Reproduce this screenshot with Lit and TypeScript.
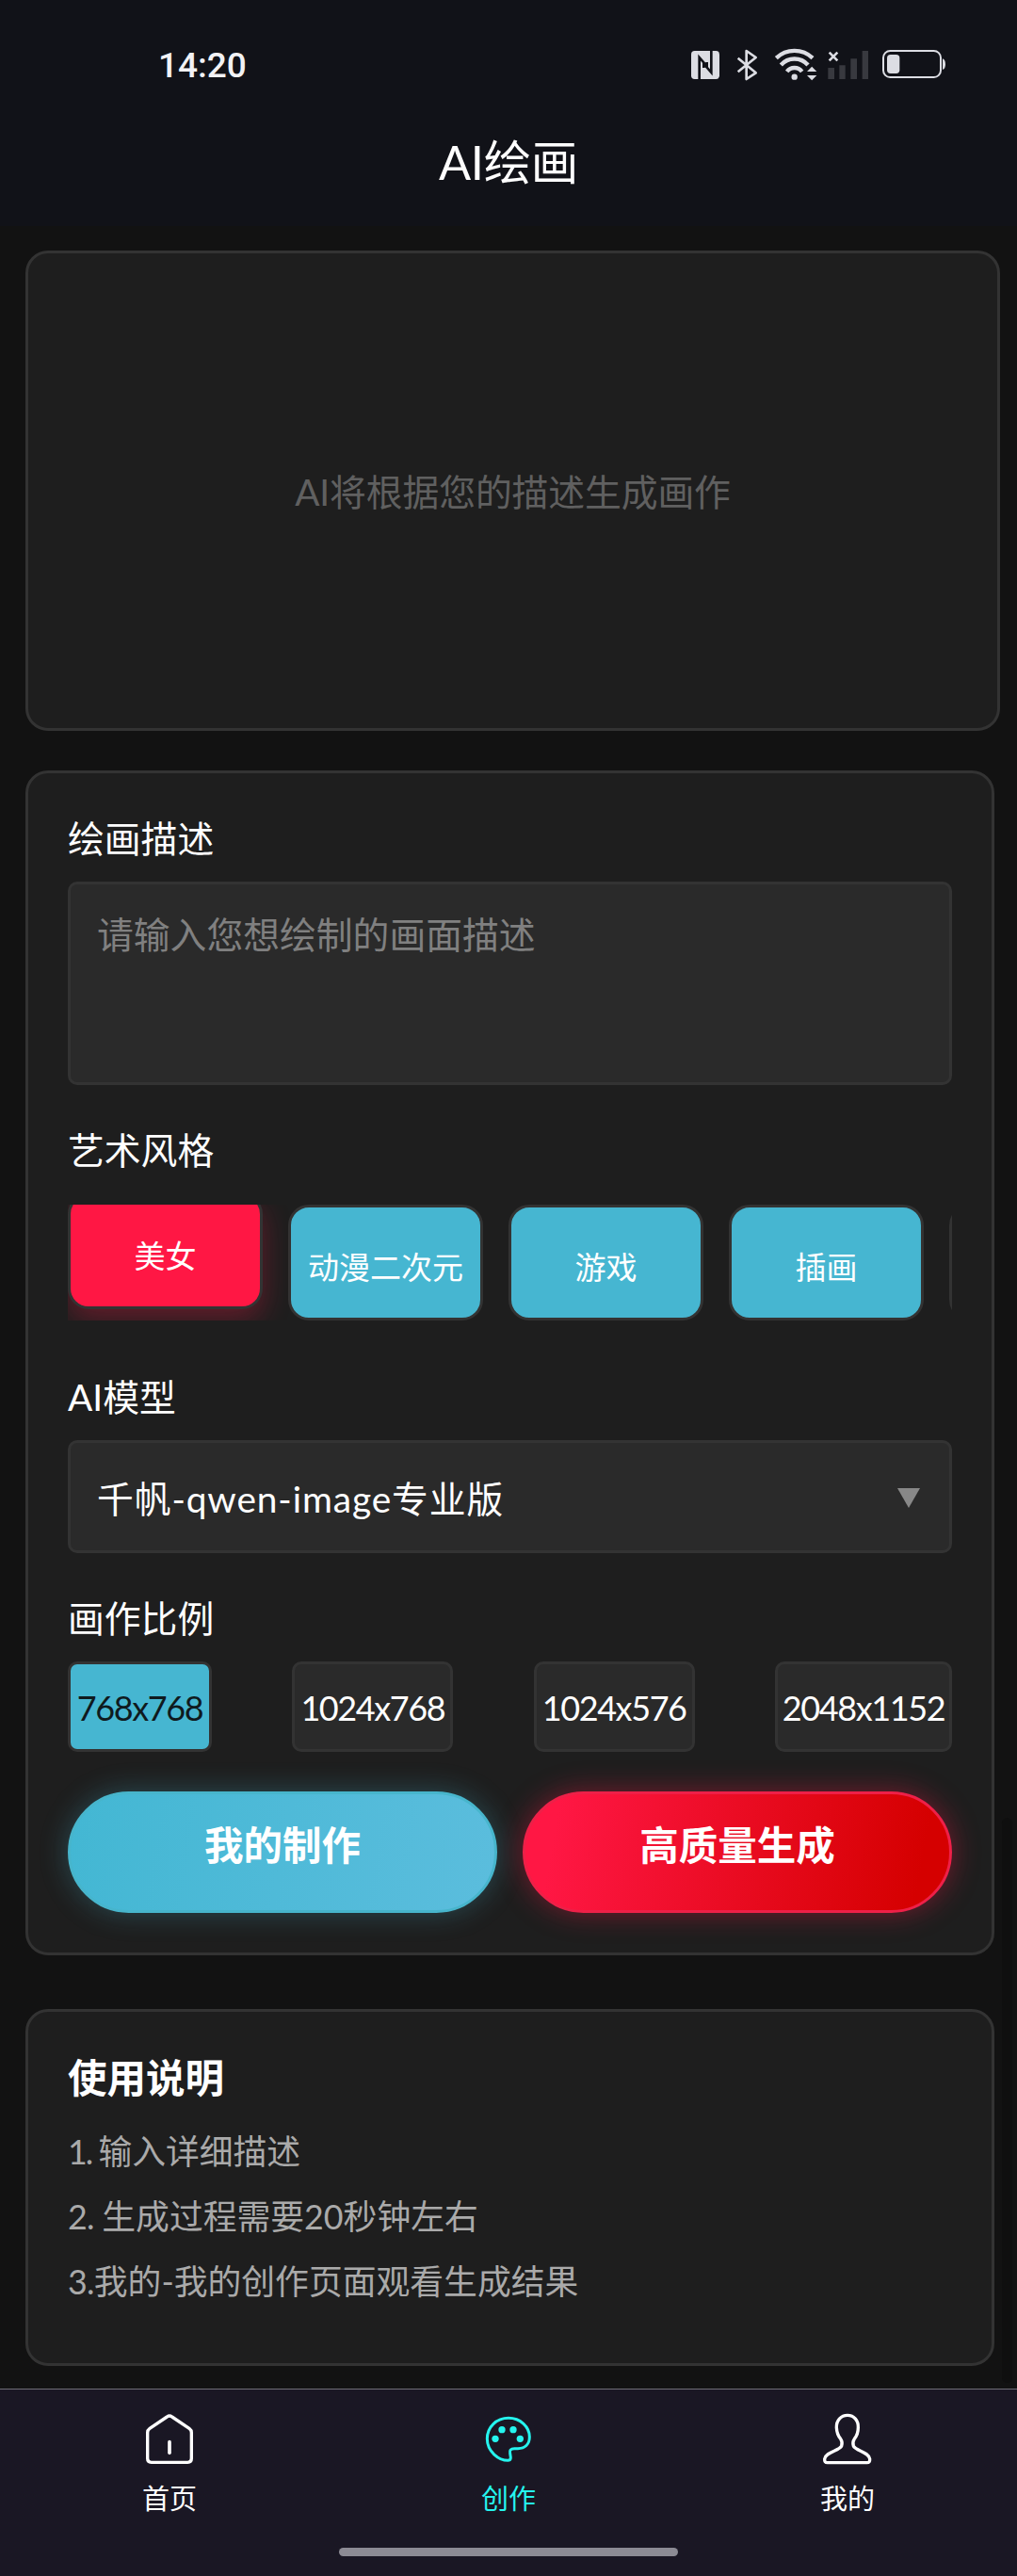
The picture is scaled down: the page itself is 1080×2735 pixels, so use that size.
import { LitElement, html, svg, css } from "lit";
import { customElement, state } from "lit/decorators.js";
import { classMap } from "lit/directives/class-map.js";

const statusIcons = svg`
  <rect x="102" y="72" width="90" height="90" rx="11" fill="#dcdde3"/>
  <path d="M128 164V93L152 121V108M166 70V141L142 113V126" fill="none" stroke="#111218" stroke-width="8"/>
  <path d="M251 95L308 142L278 162V72L308 93L251 139" fill="none" stroke="#dcdde3" stroke-width="8" stroke-linejoin="round"/>
  <g fill="none" stroke="#dcdde3" stroke-width="13">
    <path d="M373 95A84 84 0 0 1 489 95"/>
    <path d="M388 117A57 57 0 0 1 474 117"/>
    <path d="M407 138A30 30 0 0 1 455 138"/>
  </g>
  <circle cx="431" cy="155" r="9.5" fill="#dcdde3"/>
  <path d="M471 138H502L486.500 122ZM471 150H502L486.500 166Z" fill="#dcdde3"/>
  <path d="M542 77L568 103M568 77L542 103" stroke="#dcdde3" stroke-width="8"/>
  <path d="M538 126h20v36h-20zM574 118h19v44h-19zM610 97h20v65h-20zM647 72h19v90h-19z" fill="#38393f"/>
  <rect x="714" y="72" width="183" height="84" rx="22" fill="none" stroke="#dcdde3" stroke-width="6"/>
  <rect x="726" y="84" width="40" height="60" rx="11" fill="#dcdde3"/>
  <path d="M903 97Q912 100 912 115T903 132Z" fill="#dcdde3"/>
`;

const tabs = [
  {
    label: "首页",
    icon: svg`<path d="M50 98Q50 90 57 85L112 48Q120 42 128 48L183 85Q190 90 190 98V181Q190 193 178 193H62Q50 193 50 181Z" stroke-width="10"/><path d="M120 128V163" stroke-width="11"/>`,
  },
  {
    label: "创作",
    icon: svg`<path d="M118 187C90 187 52 160 52 118C52 80 82 52 120 52C158 52 187 80 187 112C187 136 172 149 150 149H139C126 149 123 156 125 165C127 176 130 187 118 187Z" stroke-width="9"/><g fill="currentColor" stroke="none"><circle cx="78" cy="118" r="11"/><circle cx="99" cy="89" r="11"/><circle cx="135" cy="89" r="11"/><circle cx="157" cy="118" r="11"/></g>`,
  },
  {
    label: "我的",
    icon: svg`<path d="M120 43C99 43 84 60 85 82C86 100 91 110 98 118C102 124 103 135 101 141C94 156 50 160 47 182Q46 194 56 194H182Q192 194 191 182C188 160 146 156 139 141C137 135 138 124 142 118C149 110 154 100 154 82C155 60 141 43 120 43Z" stroke-width="10"/>`,
  },
];

@customElement("app-root")
export class AppRoot extends LitElement {
  @state() private selectedStyle = 0;
  @state() private ratio = 0;
  @state() private tab = 1;

  private styleNames = ["美女", "动漫二次元", "游戏", "插画", ""];
  private ratios = ["768x768", "1024x768", "1024x576", "2048x1152"];

  static styles = css`
    * { box-sizing: border-box; }
    :host {
      display: flex;
      flex-direction: column;
      position: relative;
      width: 1080px;
      height: 2735px;
      overflow: hidden;
      background: #121212;
      color: #fff;
      font-family: Lato, "Noto Sans CJK SC", sans-serif;
      font-size: 38.800px;
    }
    .header { height: 240px; background: #111218; flex: none; }
    .status {
      display: flex;
      justify-content: space-between;
      padding: 50px 70px 0 168px;
      height: 140px;
    }
    .time {
      font-family: Roboto, sans-serif;
      font-weight: 500;
      font-size: 37px;
      line-height: 39px;
      color: #f2f2f5;
    }
    .status-icons { width: 280px; height: 40px; }
    .title { margin: 0; text-align: center; font-weight: 400; font-size: 50.500px; line-height: 63px; letter-spacing: -0.3px; }
    .content { flex: none; height: 2296px; padding: 26px 24px 0 27px; }
    .card { border: 3px solid #333; border-radius: 24px; background: #1e1e1e; }
    .preview {
      width: 1035px;
      height: 510px;
      display: flex;
      align-items: center;
      justify-content: center;
      padding-bottom: 2px;
      color: #606060;
      letter-spacing: -0.1px;
    }
    .form { width: 1029px; height: 1258px; margin-top: 42px; padding: 42px; }
    .label { line-height: 54px; height: 55px; margin-bottom: 18px; }
    .field { border: 3px solid #333; border-radius: 10px; background: #2a2a2a; }
    .prompt {
      height: 216px;
      padding: 27px 28px;
      line-height: 53px;
      color: #808080;
      margin-bottom: 42px;
    }
    .styles {
      display: flex;
      gap: 27px;
      height: 123px;
      overflow: hidden;
      margin: 30px 0 54px;
    }
    .chip {
      flex: none;
      width: 207px;
      height: 123px;
      border: 3px solid #333;
      border-radius: 22px;
      background: #46b6d1;
      padding-top: 12px;
      text-align: center;
      font-size: 33px;
      line-height: 103px;
      white-space: nowrap;
    }
    .chip.active {
      background: #ff1744;
      transform: translateY(-12px);
      box-shadow: 0 12px 30px rgba(255, 23, 68, 0.3);
    }
    .select {
      display: flex;
      align-items: center;
      justify-content: space-between;
      height: 120px;
      padding: 0 31px 0 28px;
      margin-bottom: 42px;
    }
    .model { letter-spacing: 0.9px; margin-top: -1px; }
    .arrow {
      border: 12px solid transparent;
      border-top: 21px solid #888;
      border-bottom: 0;
      margin-top: 3px;
    }
    .ratios { display: flex; justify-content: space-between; height: 96px; margin-bottom: 42px; }
    .ratio {
      display: flex;
      align-items: center;
      justify-content: center;
      padding: 1px 0 0;
      font-size: 36px;
      letter-spacing: -1.4px;
    }
    .ratio.w0 { width: 153px; }
    .ratio.w1, .ratio.w2 { width: 171px; }
    .ratio.w3 { width: 188px; }
    .ratio.active { background: #46b6d1; color: #0f1a1e; }
    .actions { display: flex; gap: 27px; }
    .btn {
      flex: 1;
      height: 129px;
      border-radius: 65px;
      text-align: center;
      font-size: 41.500px;
      font-weight: 600;
      line-height: 108px;
    }
    .mine {
      border: 3px solid #47b5cc;
      background: linear-gradient(100deg, #43b7d3, #5bbddd);
      box-shadow: 0 0 30px rgba(70, 182, 209, 0.3);
    }
    .generate {
      border: 3px solid #ee2048;
      background: linear-gradient(100deg, #ff1744 8%, #d50000 92%);
      box-shadow: 0 0 30px rgba(255, 23, 68, 0.4);
    }
    .help { width: 1029px; height: 379px; margin-top: 57px; padding: 42px; }
    .help h2 { margin: 0 0 15px; font-size: 41.500px; font-weight: 600; line-height: 57px; }
    .help p { margin: 0; font-size: 35.800px; line-height: 69px; color: #aaa; }
    .num { letter-spacing: -0.7px; }
    .num.narrow { letter-spacing: -2px; }
    .scrollbar {
      position: absolute;
      right: 5px;
      top: 1930px;
      width: 11px;
      height: 600px;
      border-radius: 6px;
      background: #0f0f0f;
    }
    .tabs {
      position: relative;
      display: flex;
      flex: 1;
      border-top: 1px solid #6f6d76;
      background: #1a1724;
      padding-top: 13px;
    }
    .tab { flex: 1; display: flex; flex-direction: column; align-items: center; color: #fff; }
    .tab.active { color: #25f4ee; }
    .tab svg { width: 80px; height: 75px; fill: none; stroke: currentColor; stroke-linecap: round; stroke-linejoin: round; }
    .tab span { font-size: 29px; line-height: 40px; margin-top: 8px; }
    .home-bar {
      position: absolute;
      left: 360px;
      bottom: 21px;
      width: 360px;
      height: 9px;
      border-radius: 5px;
      background: #8c8b94;
    }
  `;

  render() {
    return html`
      <header class="header">
        <div class="status">
          <span class="time">14:20</span>
          <svg class="status-icons" viewBox="90 60 840 120">${statusIcons}</svg>
        </div>
        <h1 class="title">AI绘画</h1>
      </header>
      <main class="content">
        <section class="card preview">AI将根据您的描述生成画作</section>
        <section class="card form">
          <div class="label">绘画描述</div>
          <div class="field prompt">请输入您想绘制的画面描述</div>
          <div class="label">艺术风格</div>
          <div class="styles">
            ${this.styleNames.map(
              (name, i) => html`<div
                class=${classMap({ chip: true, active: i === this.selectedStyle })}
                @click=${() => (this.selectedStyle = i)}
              >${name}</div>`
            )}
          </div>
          <div class="label">AI模型</div>
          <div class="field select">
            <span class="model">千帆-qwen-image专业版</span>
            <span class="arrow"></span>
          </div>
          <div class="label">画作比例</div>
          <div class="ratios">
            ${this.ratios.map(
              (r, i) => html`<div
                class=${classMap({ field: true, ratio: true, [`w${i}`]: true, active: i === this.ratio })}
                @click=${() => (this.ratio = i)}
              >${r}</div>`
            )}
          </div>
          <div class="actions">
            <div class="btn mine">我的制作</div>
            <div class="btn generate">高质量生成</div>
          </div>
        </section>
        <section class="card help">
          <h2>使用说明</h2>
          <p><span class="num narrow">1. </span>输入详细描述</p>
          <p><span class="num">2. </span>生成过程需要20秒钟左右</p>
          <p><span class="num">3.</span>我的-我的创作页面观看生成结果</p>
        </section>
      </main>
      <div class="scrollbar"></div>
      <nav class="tabs">
        ${tabs.map(
          (t, i) => html`<div
            class=${classMap({ tab: true, active: i === this.tab })}
            @click=${() => (this.tab = i)}
          >
            <svg viewBox="0 0 240 225">${t.icon}</svg>
            <span>${t.label}</span>
          </div>`
        )}
        <div class="home-bar"></div>
      </nav>
    `;
  }
}
